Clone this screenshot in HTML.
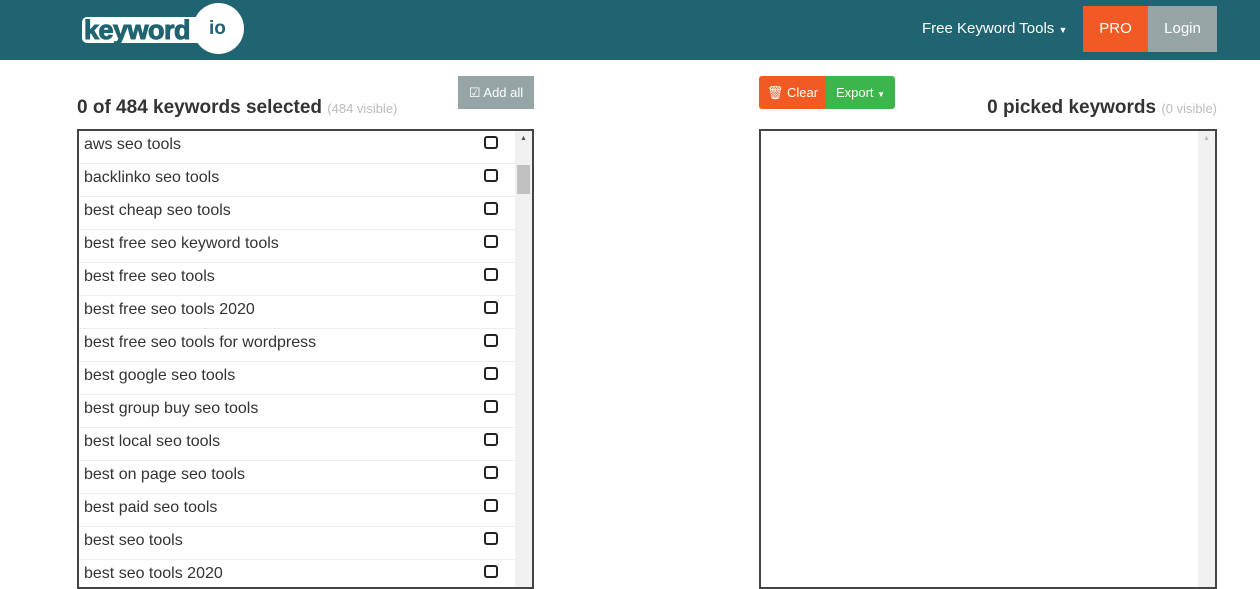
<!DOCTYPE html>
<html><head><style>
*{margin:0;padding:0;box-sizing:border-box}
body{width:1260px;height:557px;overflow:hidden;background:#fff;font-family:"Liberation Sans",Arial,sans-serif;color:#333;position:relative}
.hdr{position:absolute;left:0;top:0;width:1260px;height:60px;background:#1f6470}
.logo-rect{position:absolute;left:82px;top:17px;width:130px;height:26px;background:#fff;border-radius:5px}
.logo-circ{position:absolute;left:193px;top:3px;width:51px;height:51px;background:#fff;border-radius:50%}
.logo-t{position:absolute;left:84px;top:15px;font-size:27px;font-weight:bold;color:#1f6470;letter-spacing:-0.5px;-webkit-text-stroke:1px #1f6470}
.logo-io{position:absolute;left:209px;top:18px;font-size:19px;font-weight:bold;color:#1f6470}
.nav{position:absolute;left:922px;top:20px;color:#fff;font-size:15px}
.pro{position:absolute;left:1083px;top:6px;width:65px;height:46px;background:#f15a24;color:#fff;font-size:15px;text-align:center;line-height:46px}
.login{position:absolute;left:1148px;top:6px;width:69px;height:46px;background:#95a5a6;color:#fff;font-size:15px;text-align:center;line-height:46px}
.btn{position:absolute;height:33px;color:#fff;font-size:13px;line-height:33px;text-align:center}
h3{position:absolute;font-size:19px;font-weight:bold;color:#333;white-space:nowrap}
h3 small{font-size:13px;color:#bbb;font-weight:normal}
.box{position:absolute;top:129px;height:460px;border:2px solid #444;overflow:hidden}
.row{height:33px;border-bottom:1px solid #eee;font-size:16px;line-height:27px;padding-left:5px;position:relative;width:436px}
.cb{position:absolute;left:405px;top:5px;width:14px;height:13px;border:2.5px solid #222;border-radius:3px}
.sb{position:absolute;top:0;width:17px;height:460px;background:#f1f1f1}
</style></head><body>
<div class="hdr">
<div class="logo-rect"></div><div class="logo-circ"></div>
<div class="logo-t">keyword</div><div class="logo-io">io</div>
<div class="nav">Free Keyword Tools <span style="font-size:9px">▼</span></div>
<div class="pro">PRO</div><div class="login">Login</div>
</div>
<div class="btn" style="left:458px;top:76px;width:76px;background:#95a5a6">☑ Add all</div>
<div class="btn" style="left:759px;top:76px;width:67px;background:#f15a24;border-radius:3px 0 0 3px">🗑 Clear</div>
<div class="btn" style="left:826px;top:76px;width:69px;background:#3cb54a;border-radius:0 3px 3px 0">Export <span style="font-size:8px">▼</span></div>
<h3 style="left:77px;top:97px">0 of 484 keywords selected <small>(484 visible)</small></h3>
<h3 style="right:43px;top:97px">0 picked keywords <small>(0 visible)</small></h3>
<div class="box" style="left:77px;width:457px">
<div class="row">aws seo tools<div class="cb"></div></div>
<div class="row">backlinko seo tools<div class="cb"></div></div>
<div class="row">best cheap seo tools<div class="cb"></div></div>
<div class="row">best free seo keyword tools<div class="cb"></div></div>
<div class="row">best free seo tools<div class="cb"></div></div>
<div class="row">best free seo tools 2020<div class="cb"></div></div>
<div class="row">best free seo tools for wordpress<div class="cb"></div></div>
<div class="row">best google seo tools<div class="cb"></div></div>
<div class="row">best group buy seo tools<div class="cb"></div></div>
<div class="row">best local seo tools<div class="cb"></div></div>
<div class="row">best on page seo tools<div class="cb"></div></div>
<div class="row">best paid seo tools<div class="cb"></div></div>
<div class="row">best seo tools<div class="cb"></div></div>
<div class="row">best seo tools 2020<div class="cb"></div></div>
<div class="sb" style="left:436px"><div style="font-size:7px;color:#555;text-align:center;margin-top:4px">▲</div><div style="position:absolute;left:2px;top:34px;width:13px;height:29px;background:#c1c1c1"></div></div>
</div>
<div class="box" style="left:759px;width:458px">
<div class="sb" style="left:437px"><div style="font-size:7px;color:#bbb;text-align:center;margin-top:4px">▲</div></div>
</div>
</body></html>
